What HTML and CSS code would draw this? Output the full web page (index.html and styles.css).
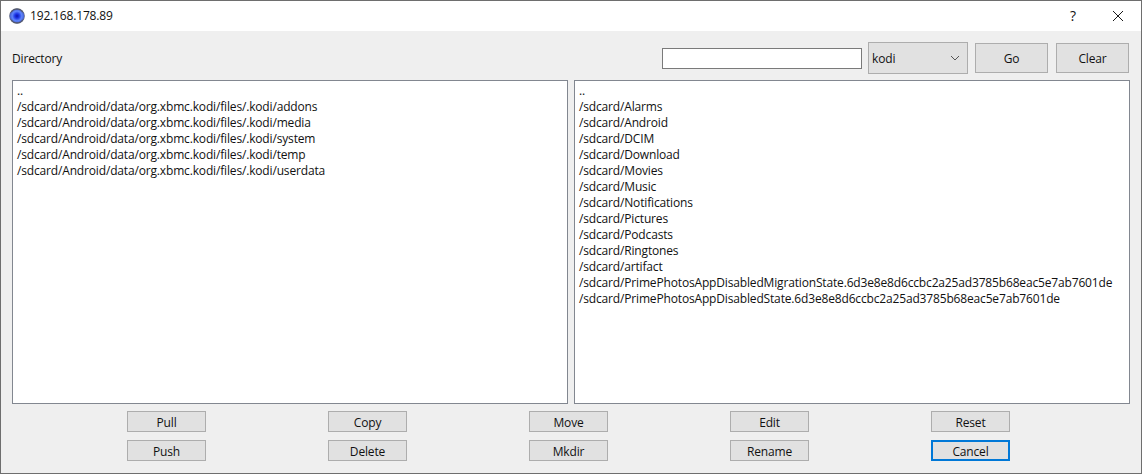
FILE: index.html
```html
<!DOCTYPE html>
<html lang="en">
<head>
<meta charset="utf-8">
<title>192.168.178.89</title>
<link rel="stylesheet" href="styles.css">
</head>
<body>
<div class="window">
  <header class="titlebar">
    <svg class="app-icon" width="16" height="16" viewBox="0 0 16 16">
      <defs>
        <radialGradient id="orb" cx="50%" cy="50%" r="50%">
          <stop offset="0" stop-color="#0c14a8"/>
          <stop offset="0.28" stop-color="#1c34e6"/>
          <stop offset="0.62" stop-color="#5f86fa"/>
          <stop offset="0.85" stop-color="#4a66d8"/>
          <stop offset="1" stop-color="#5a5f6a"/>
        </radialGradient>
      </defs>
      <circle cx="8" cy="8" r="7.8" fill="url(#orb)"/>
      <path d="M2 4.5A7 7 0 0 1 14 4.5M14 11.5A7 7 0 0 1 2 11.5" fill="none" stroke="#555" stroke-width="1"/>
    </svg>
    <span class="title">192.168.178.89</span>
    <span class="help">?</span>
    <svg class="close" width="12" height="12" viewBox="0 0 12 12">
      <path d="M1 1L11 11M11 1L1 11" stroke="#1a1a1a" stroke-width="1" fill="none"/>
    </svg>
  </header>
  <main class="content">
    <div class="toolbar">
      <span class="label">Directory</span>
      <input class="path" type="text">
      <div class="combo"><span>kodi</span>
        <svg width="10" height="6" viewBox="0 0 10 6"><path d="M1 1L5 5L9 1" stroke="#555" fill="none"/></svg>
      </div>
      <button class="btn tall go">Go</button>
      <button class="btn tall clear">Clear</button>
    </div>
    <div class="lists">
      <div class="list">
        <div>..</div>
        <div>/sdcard/Android/data/org.xbmc.kodi/files/.kodi/addons</div>
        <div>/sdcard/Android/data/org.xbmc.kodi/files/.kodi/media</div>
        <div>/sdcard/Android/data/org.xbmc.kodi/files/.kodi/system</div>
        <div>/sdcard/Android/data/org.xbmc.kodi/files/.kodi/temp</div>
        <div>/sdcard/Android/data/org.xbmc.kodi/files/.kodi/userdata</div>
      </div>
      <div class="list">
        <div>..</div>
        <div>/sdcard/Alarms</div>
        <div>/sdcard/Android</div>
        <div>/sdcard/DCIM</div>
        <div>/sdcard/Download</div>
        <div>/sdcard/Movies</div>
        <div>/sdcard/Music</div>
        <div>/sdcard/Notifications</div>
        <div>/sdcard/Pictures</div>
        <div>/sdcard/Podcasts</div>
        <div>/sdcard/Ringtones</div>
        <div>/sdcard/artifact</div>
        <div>/sdcard/PrimePhotosAppDisabledMigrationState.6d3e8e8d6ccbc2a25ad3785b68eac5e7ab7601de</div>
        <div>/sdcard/PrimePhotosAppDisabledState.6d3e8e8d6ccbc2a25ad3785b68eac5e7ab7601de</div>
      </div>
    </div>
    <div class="actions">
      <button class="btn">Pull</button>
      <button class="btn">Copy</button>
      <button class="btn">Move</button>
      <button class="btn">Edit</button>
      <button class="btn">Reset</button>
      <button class="btn">Push</button>
      <button class="btn">Delete</button>
      <button class="btn">Mkdir</button>
      <button class="btn">Rename</button>
      <button class="btn default">Cancel</button>
    </div>
  </main>
</div>
</body>
</html>
```

FILE: styles.css
```css
* { box-sizing: border-box; }
html, body { margin: 0; height: 100%; }
body {
  font-family: "Open Sans", "Noto Sans", sans-serif;
  font-size: 12px;
  letter-spacing: -0.16px;
  color: #111;
  overflow: hidden;
}
.window {
  height: 100vh;
  border: 1px solid #6e6e6e;
  display: flex;
  flex-direction: column;
  background: #efefef;
}
.titlebar {
  height: 30px;
  background: #fff;
  display: flex;
  align-items: center;
  padding-left: 8px;
  padding-bottom: 1px;
}
.app-icon { flex: none; }
.title { margin-left: 5px; }
.help { margin-left: auto; font-size: 14px; }
.close { margin-left: 36px; margin-right: 17px; }
.content {
  flex: 1;
  padding: 11px 11px 0;
  display: flex;
  flex-direction: column;
}
.toolbar {
  display: flex;
  align-items: center;
  height: 32px;
}
.label { margin-right: auto; }
.path {
  width: 200px;
  height: 21px;
  border: 1px solid #7a7a7a;
  background: #fff;
  padding: 0;
  margin-right: 6px;
}
.combo {
  width: 100px;
  height: 32px;
  border: 1px solid #adadad;
  background: #e1e1e1;
  display: flex;
  align-items: center;
  justify-content: space-between;
  padding: 0 3px;
  margin-right: 7px;
}
.combo svg { margin-right: 4px; }
.btn {
  font: inherit;
  letter-spacing: inherit;
  color: inherit;
  width: 79px;
  height: 21px;
  padding: 1px 0 0;
  border: 1px solid #adadad;
  background: #e1e1e1;
  border-radius: 0;
}
.btn.tall { width: 73px; height: 30px; padding-top: 0; }
.go { margin-right: 8px; }
.clear { margin-right: 1px; }
.btn.default { border: 2px solid #0078d7; }
.lists {
  display: flex;
  gap: 6px;
  margin-top: 6px;
  height: 324px;
}
.list {
  flex: 1;
  background: #fff;
  border: 1px solid #828790;
  padding: 2px 4px;
  line-height: 16px;
  white-space: nowrap;
  overflow: hidden;
}
.actions {
  display: grid;
  grid-template-columns: repeat(5, 79px);
  column-gap: 122px;
  row-gap: 8px;
  margin-top: 7px;
  padding-left: 115px;
}
```
